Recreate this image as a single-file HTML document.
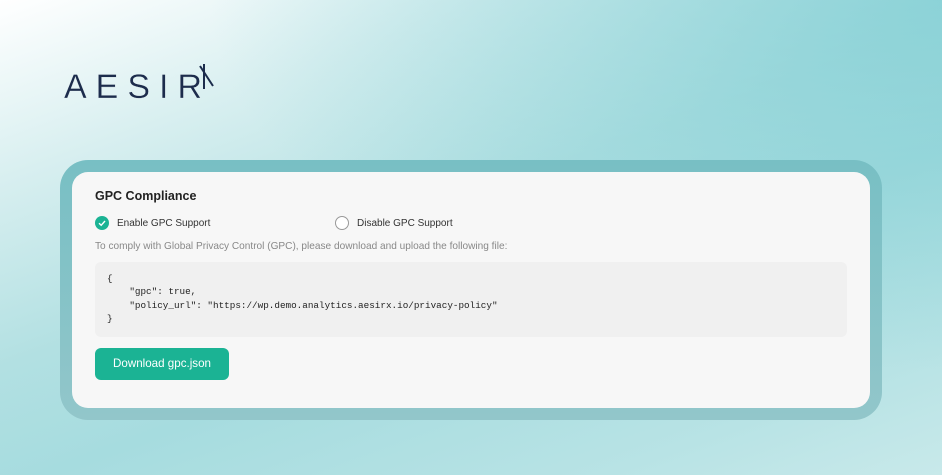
<!DOCTYPE html>
<html><head><meta charset="utf-8"><style>
html,body{margin:0;padding:0;width:942px;height:475px;overflow:hidden}
body{position:relative;font-family:"Liberation Sans",sans-serif;
background:linear-gradient(160deg,#ffffff 0%,#d8eff0 22%,#b2e0e2 45%,#a6dcdf 60%,#b8e3e5 85%,#c8e9ea 100%);}
.bg2{position:absolute;inset:0;background:radial-gradient(ellipse at 100% 0%,rgba(122,204,210,.7) 0%,rgba(122,204,210,0) 55%)}
.logo{position:absolute;left:64px;top:68px;font-size:34px;letter-spacing:9px;color:#1c2c4c;font-weight:300;-webkit-text-stroke:0.3px #e8f4f5}
.frame{position:absolute;left:60px;top:160px;width:822px;height:260px;border-radius:28px;background:linear-gradient(180deg,#78bfc4,#92c6ca)}
.card{position:absolute;left:72px;top:172px;width:798px;height:236px;border-radius:16px;background:#f7f7f7}
.title{position:absolute;left:95px;top:189px;font-size:12.5px;font-weight:bold;color:#222}
.r{position:absolute;top:216px;font-size:10px;color:#333;display:flex;align-items:center}
.r .c{width:14px;height:14px;border-radius:50%;margin-right:8px;box-sizing:border-box}
.desc{position:absolute;left:95px;top:241px;font-size:10.1px;color:#888}
.code{position:absolute;left:95px;top:262px;width:752px;height:75px;border-radius:6px;background:#f0f0f0}
.code pre{margin:0;position:absolute;left:12px;top:10px;font-family:"Liberation Mono",monospace;font-size:9.3px;line-height:13.3px;color:#222}
.btn{position:absolute;left:95px;top:348px;width:134px;height:32px;border-radius:6px;background:#1bb394;color:#fff;font-size:11.6px;text-align:center;line-height:32px}
</style></head><body>
<div class="bg2"></div>
<div class="logo">AESIR</div>
<svg style="position:absolute;left:198px;top:63px" width="18" height="30" viewBox="0 0 18 30"><path d="M6 1 L6 26 M2 3 L15 23" stroke="#1c2c4c" stroke-width="2" fill="none"/></svg>
<div class="frame"></div>
<div class="card"></div>
<div class="title">GPC Compliance</div>
<div class="r" style="left:95px"><span class="c" style="background:#1bb394;display:flex;align-items:center;justify-content:center"><svg width="10" height="10" viewBox="0 0 10 10"><path d="M2 5.2 L4.2 7.3 L8 3" stroke="#fff" stroke-width="1.4" fill="none"/></svg></span>Enable GPC Support</div>
<div class="r" style="left:335px"><span class="c" style="border:1px solid #999;background:#fff"></span>Disable GPC Support</div>
<div class="desc">To comply with Global Privacy Control (GPC), please download and upload the following file:</div>
<div class="code"><pre>{
    "gpc": true,
    "policy_url": "https://wp.demo.analytics.aesirx.io/privacy-policy"
}</pre></div>
<div class="btn">Download gpc.json</div>
</body></html>
